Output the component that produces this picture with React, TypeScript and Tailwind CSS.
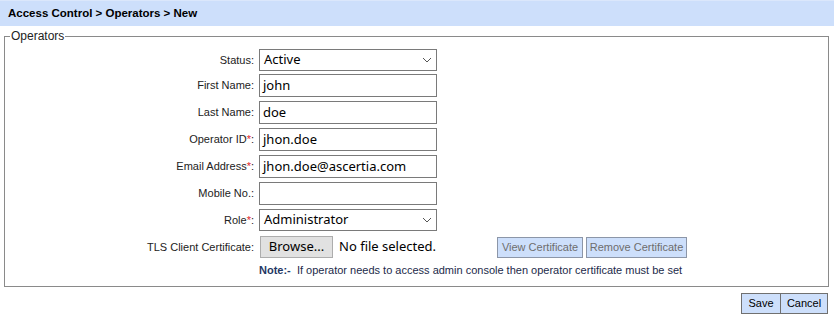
import React from "react";

const labelFont = "[font-family:'Liberation_Sans',Arial,sans-serif]";
const fieldFont = "[font-family:'Noto_Sans','Open_Sans',sans-serif]";

function Label({ text, required }: { text: string; required?: boolean }) {
  return (
    <div className="w-[254px] shrink-0 pr-[5px] text-right text-[11px] text-[#222]">
      {text}
      {required && <span className="text-[#e0252a]">*</span>}:
    </div>
  );
}

function Chevron() {
  return (
    <svg width="10" height="6" viewBox="0 0 10 6" className="mr-[4px]">
      <path d="M1 1 L5 5 L9 1" fill="none" stroke="#555" strokeWidth="1" />
    </svg>
  );
}

function SelectBox({ value }: { value: string }) {
  return (
    <div
      className={`flex h-[22px] w-[178px] items-center justify-between border border-[#7a7a7a] bg-white pl-[4px] text-[13px] text-black ${fieldFont}`}
    >
      <span>{value}</span>
      <Chevron />
    </div>
  );
}

function TextBox({ value }: { value?: string }) {
  return (
    <div
      className={`flex h-[23px] w-[178px] items-center border border-[#7a7a7a] bg-white pl-[3px] text-[13px] text-black ${fieldFont}`}
    >
      {value}
    </div>
  );
}

function Row({
  label,
  required,
  children,
  className = "",
}: {
  label: string;
  required?: boolean;
  children: React.ReactNode;
  className?: string;
}) {
  return (
    <div className={`flex items-center ${className}`}>
      <Label text={label} required={required} />
      {children}
    </div>
  );
}

export default function App() {
  return (
    <div className={`h-[327px] w-[834px] bg-white ${labelFont}`}>
      <div className="flex h-[26px] items-center border-t border-[#dbe7fb] bg-[#cddffb] pl-[8px] text-[11.5px] font-bold text-black">
        Access Control &gt; Operators &gt; New
      </div>

      <fieldset className="mx-[4px] mt-[1px] mr-[5px] h-[260px] border border-[#8a8a8a] pl-0">
        <legend className="ml-[5px] px-[1px] text-[12px] text-[#222]">Operators</legend>
        <div className="mt-[4px] flex flex-col">
          <Row label="Status" className="mb-[3px]">
            <SelectBox value="Active" />
          </Row>
          <Row label="First Name" className="mb-[4px]">
            <TextBox value="john" />
          </Row>
          <Row label="Last Name" className="mb-[4px]">
            <TextBox value="doe" />
          </Row>
          <Row label="Operator ID" required className="mb-[4px]">
            <TextBox value="jhon.doe" />
          </Row>
          <Row label="Email Address" required className="mb-[4px]">
            <TextBox value="jhon.doe@ascertia.com" />
          </Row>
          <Row label="Mobile No." className="mb-[4px]">
            <TextBox />
          </Row>
          <Row label="Role" required className="mb-[5px]">
            <SelectBox value="Administrator" />
          </Row>
          <Row label="TLS Client Certificate">
            <div className="flex items-center">
              <div
                className={`ml-[1px] flex h-[22px] w-[73px] items-center justify-center border border-[#adadad] bg-[#e1e1e1] text-[13px] text-black ${fieldFont}`}
              >
                Browse...
              </div>
              <span className={`ml-[6px] text-[13px] text-black ${fieldFont}`}>No file selected.</span>
              <div className="ml-[61px] flex h-[21px] w-[86px] items-center justify-center border border-[#8c96a8] bg-[#cddffb] text-[11px] text-[#6d6d6d]">
                View Certificate
              </div>
              <div className="ml-[3px] flex h-[21px] w-[101px] items-center justify-center border border-[#8c96a8] bg-[#cddffb] text-[11px] text-[#6d6d6d]">
                Remove Certificate
              </div>
            </div>
          </Row>
          <div className="mt-[4px] pl-[254px] text-[11px] text-[#1c2a4a]">
            <span className="font-bold text-[#1f3864]">Note:-</span>&nbsp; If operator needs to access admin console
            then operator certificate must be set
          </div>
        </div>
      </fieldset>

      <div className="mt-[6px] flex justify-end pr-[6px]">
        <div className="flex h-[21px] w-[40px] items-center justify-center border border-[#707070] bg-[#cddffb] text-[11px] text-black">
          Save
        </div>
        <div className="flex h-[21px] w-[47px] items-center justify-center border border-l-0 border-[#707070] bg-[#cddffb] text-[11px] text-black">
          Cancel
        </div>
      </div>
    </div>
  );
}
